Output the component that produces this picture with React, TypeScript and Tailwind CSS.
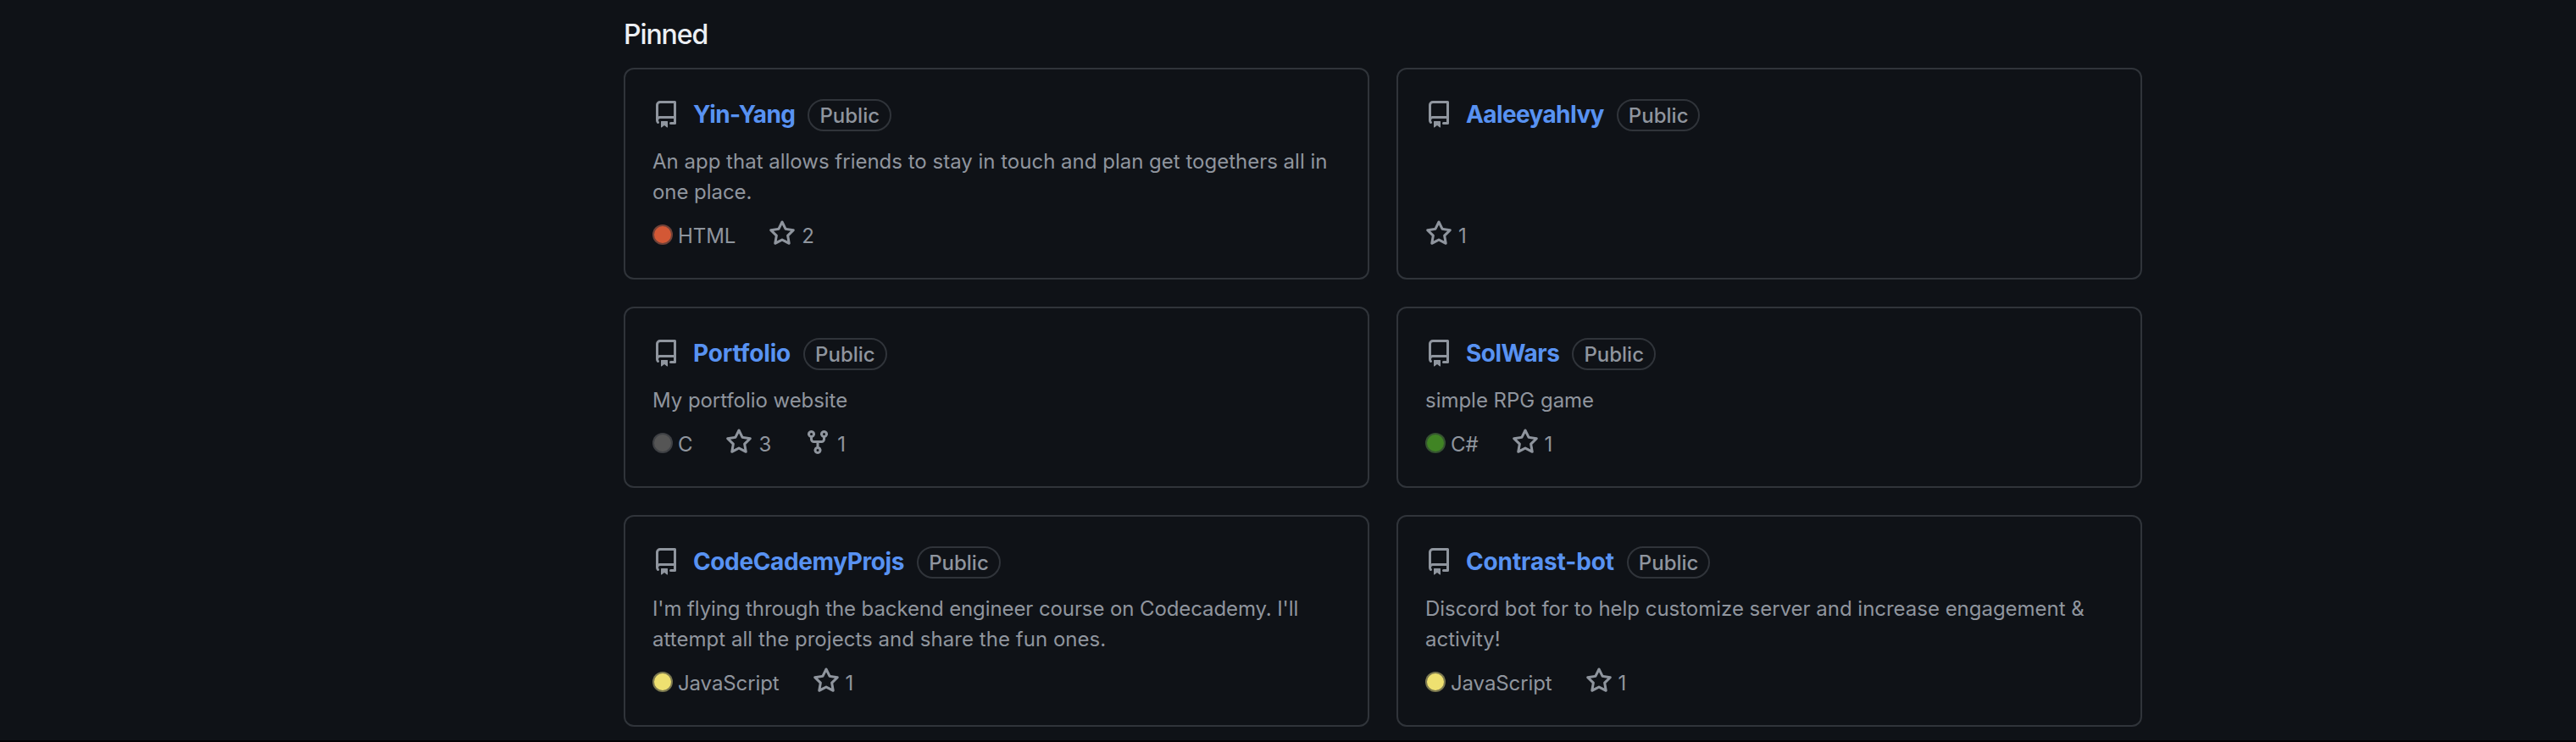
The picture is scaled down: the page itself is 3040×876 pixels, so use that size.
import React from "react";

const REPO =
  "M2 2.5A2.5 2.5 0 014.5 0h8.75a.75.75 0 01.75.75v12.5a.75.75 0 01-.75.75h-2.5a.75.75 0 110-1.5h1.75v-2h-8a1 1 0 00-.714 1.7.75.75 0 01-1.072 1.05A2.495 2.495 0 012 11.5v-9zm10.5-1V9h-8c-.356 0-.694.074-1 .208V2.5a1 1 0 011-1h8zM5 12.25v3.25a.25.25 0 00.4.2l1.45-1.087a.25.25 0 01.3 0L8.6 15.7a.25.25 0 00.4-.2v-3.25a.25.25 0 00-.25-.25h-3.5a.25.25 0 00-.25.25z";
const STAR =
  "M8 .25a.75.75 0 01.673.418l1.882 3.815 4.21.612a.75.75 0 01.416 1.279l-3.046 2.97.719 4.192a.75.75 0 01-1.088.791L8 12.347l-3.766 1.98a.75.75 0 01-1.088-.79l.72-4.194L.818 6.374a.75.75 0 01.416-1.28l4.21-.611L7.327.668A.75.75 0 018 .25zm0 2.445L6.615 5.5a.75.75 0 01-.564.41l-3.097.45 2.24 2.184a.75.75 0 01.216.664l-.528 3.084 2.769-1.456a.75.75 0 01.698 0l2.77 1.456-.53-3.084a.75.75 0 01.216-.664l2.24-2.183-3.096-.45a.75.75 0 01-.564-.41L8 2.694v.001z";
const FORK =
  "M5 3.25a.75.75 0 11-1.5 0 .75.75 0 011.5 0zm0 2.122a2.25 2.25 0 10-1.5 0v.878A2.25 2.25 0 005.75 8.5h1.5v2.128a2.251 2.251 0 101.5 0V8.5h1.5a2.25 2.25 0 002.25-2.25v-.878a2.25 2.25 0 10-1.5 0v.878a.75.75 0 01-.75.75h-4.5A.75.75 0 015 6.25v-.878zm3.75 7.378a.75.75 0 11-1.5 0 .75.75 0 011.5 0zm3-8.75a.75.75 0 100-1.5.75.75 0 000 1.5z";

function Icon({ d, className = "" }: { d: string; className?: string }) {
  return (
    <svg viewBox="0 0 16 16" className={`size-8 shrink-0 ${className}`} fill="currentColor" fillRule="evenodd">
      <path d={d} />
    </svg>
  );
}

type Line = { text: string; tracking: string };

type Repo = {
  name: string;
  tracking: string;
  description: Line[];
  language?: string;
  dot?: string;
  stars: number;
  forks?: number;
};

const repos: Repo[] = [
  {
    name: "Yin-Yang",
    tracking: "tracking-[-0.6px]",
    description: [
      {
        text: "An app that allows friends to stay in touch and plan get togethers all in",
        tracking: "tracking-[0px]",
      },
      { text: "one place.", tracking: "tracking-[-0.05px]" },
    ],
    language: "HTML",
    dot: "bg-[#d35835]",
    stars: 2,
  },
  { name: "AaleeyahIvy", tracking: "tracking-[-0.62px]", description: [], stars: 1 },
  {
    name: "Portfolio",
    tracking: "tracking-[-0.15px]",
    description: [{ text: "My portfolio website", tracking: "tracking-[-0.05px]" }],
    language: "C",
    dot: "bg-[#555555]",
    stars: 3,
    forks: 1,
  },
  {
    name: "SolWars",
    tracking: "tracking-[-0.5px]",
    description: [{ text: "simple RPG game", tracking: "tracking-[-0.02px]" }],
    language: "C#",
    dot: "bg-[#408424]",
    stars: 1,
  },
  {
    name: "CodeCademyProjs",
    tracking: "tracking-[-0.38px]",
    description: [
      {
        text: "I'm flying through the backend engineer course on Codecademy. I'll",
        tracking: "tracking-[-0.1px]",
      },
      { text: "attempt all the projects and share the fun ones.", tracking: "tracking-[0.04px]" },
    ],
    language: "JavaScript",
    dot: "bg-[#eee070]",
    stars: 1,
  },
  {
    name: "Contrast-bot",
    tracking: "tracking-[-0.14px]",
    description: [
      {
        text: "Discord bot for to help customize server and increase engagement &",
        tracking: "tracking-[-0.02px]",
      },
      { text: "activity!", tracking: "tracking-[-0.02px]" },
    ],
    language: "JavaScript",
    dot: "bg-[#eee070]",
    stars: 1,
  },
];

function Count({ d, value }: { d: string; value: number }) {
  return (
    <span className="flex items-center">
      <Icon d={d} className="relative -top-[2px]" />
      <span className="ml-[7px] pt-[2px]">{value}</span>
    </span>
  );
}

function Card({ repo }: { repo: Repo }) {
  return (
    <li className="flex flex-col rounded-xl border-2 border-[#30343a] p-8">
      <div className="flex h-[42px] items-center">
        <Icon d={REPO} />
        <a className={`ml-4 text-[28px] leading-[42px] font-[650] text-[#5892f2] ${repo.tracking}`}>{repo.name}</a>
        <span className="relative top-px ml-[15px] flex h-[38px] items-center rounded-full border-2 border-[#30343a] px-3 pt-[2px] text-[24px] font-medium">
          Public
        </span>
      </div>
      <p className="mt-[17px] mb-[15px] grow text-[24px] leading-9 font-[430] whitespace-nowrap">
        {repo.description.map((line) => (
          <span key={line.text} className={`block ${line.tracking}`}>
            {line.text}
          </span>
        ))}
      </p>
      <div className="flex h-9 items-center gap-[39px] text-[24px] leading-9 font-[430]">
        {repo.language && (
          <span className="flex items-center">
            <span className={`relative -top-px size-6 rounded-full border-2 border-[#30343a]/60 ${repo.dot}`} />
            <span className="ml-[6px] pt-[2px] tracking-[-0.1px]">{repo.language}</span>
          </span>
        )}
        <Count d={STAR} value={repo.stars} />
        {repo.forks !== undefined && <Count d={FORK} value={repo.forks} />}
      </div>
    </li>
  );
}

export default function App() {
  return (
    <main className="h-[876px] w-[3040px] border-b-2 border-[#030205] bg-[#0f1217] pt-[17px] pl-[736px] font-['Inter',sans-serif] text-[#8f959e]">
      <h2 className="h-[63px] text-[32px] leading-[48px] font-[450] tracking-[-1.1px] text-[#eceff4]">Pinned</h2>
      <ol className="grid w-[1792px] grid-cols-2 grid-rows-[250px_214px_250px] gap-8">
        {repos.map((r) => (
          <Card key={r.name} repo={r} />
        ))}
      </ol>
    </main>
  );
}
